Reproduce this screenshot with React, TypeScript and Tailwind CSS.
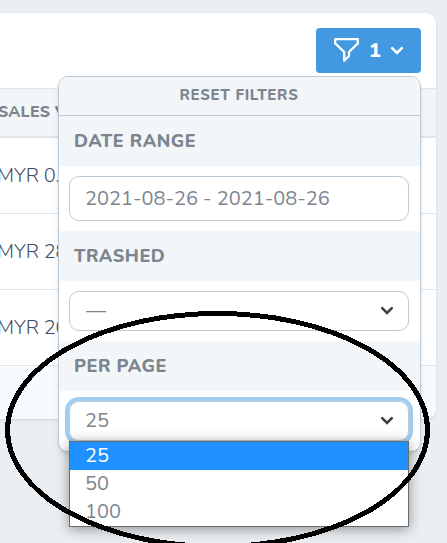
const sales = ["MYR 0.00", "MYR 28.00", "MYR 20.00"];
const perPage = ["25", "50", "100"];

const Chevron = ({ className }: { className: string }) => (
  <svg className={className} width="14" height="10" viewBox="0 0 14 10" fill="none" stroke="currentColor">
    <path d="M2.2 2.2 7 7l4.8-4.8" strokeWidth="2.6" strokeLinecap="round" />
  </svg>
);

const SectionTitle = ({ title }: { title: string }) => (
  <h3 className="flex h-[50px] items-center bg-[#f2f6f9] pl-[15px] text-[18px] leading-none font-extrabold tracking-[0.55px] text-[#7c858e]">
    {title}
  </h3>
);

const SalesTable = () => (
  <div className="h-[406px] w-[436px] overflow-hidden rounded-r-[10px] bg-white shadow-sm">
    <div className="h-[75px]" />
    <div className="flex h-[50px] items-center border-t border-b-2 border-[#e0e5e9] bg-[#f2f6f9] pb-0.5 text-[16px] leading-none font-extrabold tracking-[0.2px] whitespace-nowrap text-[#7c858e]">
      <span className="-ml-0.5">SALES VALUE</span>
    </div>
    {sales.map((value) => (
      <div key={value} className="flex h-[76px] items-center border-b border-[#e0e5e9] text-[20px] font-light tracking-[-0.1px] whitespace-nowrap text-[#3c4b5f]">
        <span className="-ml-[3px]">{value}</span>
      </div>
    ))}
    <div className="h-[53px] bg-[#f6fbff]" />
  </div>
);

const FilterMenu = () => (
  <div className="absolute top-[76px] left-[58px] h-[376px] w-[363px] overflow-hidden rounded-[10px] border border-[#bacad6] bg-white shadow-md">
    <button className="block h-[39px] w-full border-b border-[#bacad6] bg-[#f2f6f9] pr-px pb-0.5 text-[15px] leading-none font-extrabold tracking-[0.7px] text-[#7c858e]">
      RESET FILTERS
    </button>
    <SectionTitle title="DATE RANGE" />
    <div className="py-[10px] pr-[11px] pl-[10px]">
      <div className="flex h-[45px] items-center rounded-[10px] border border-[#bacad6] pl-[15px] text-[20px] text-[#7c858e]">
        <span>2021-08-26 - 2021-08-26</span>
      </div>
    </div>
    <SectionTitle title="TRASHED" />
    <div className="py-[10px] pr-[11px] pl-[10px]">
      <div className="flex h-10 items-center justify-between rounded-[10px] border border-[#bacad6] pr-[14px] pl-4 text-[20px] text-[#7c858e]">
        <span>—</span>
        <Chevron className="text-[#3c4046]" />
      </div>
    </div>
    <SectionTitle title="PER PAGE" />
    <div className="py-[10px] pr-[11px] pl-[10px]">
      <div className="flex h-10 items-center justify-between rounded-[10px] border border-[#bacad6] pr-[14px] pl-[15px] text-[20px] text-[#7c858e] ring-4 ring-[#a0cdf0]">
        <span>25</span>
        <Chevron className="text-[#3c4046]" />
      </div>
    </div>
  </div>
);

export default function App() {
  return (
    <div className="relative h-[543px] w-[447px] overflow-hidden bg-[#ebeff2] pt-[13px] font-['Nunito','Lato',sans-serif]">
      <SalesTable />

      <button className="absolute top-[28px] left-[316px] flex h-[45px] w-[105px] items-center rounded-[4px] bg-[#4299e1] pl-[17px] text-white">
        <svg width="27" height="27" viewBox="0 0 27 27" fill="none" stroke="currentColor" strokeWidth="2.3" strokeLinejoin="round">
          <path d="M2.2 2.2h22.6v4.2L16 15v4l-4.8 4.8V15L2.2 6.4z" />
        </svg>
        <span className="ml-[9px] w-3 text-center text-[20px] leading-none font-extrabold">1</span>
        <Chevron className="ml-[9px]" />
      </button>

      <FilterMenu />

      <ul className="absolute top-[441px] left-[69px] w-[340px] border border-[#666b70] bg-white text-[20px] leading-[28px] text-[#7c858e] shadow-[0_2px_12px_rgba(0,0,0,0.4)]">
        {perPage.map((n) => (
          <li key={n} className="h-7 pl-[15px] first:bg-[#1e90ff] first:text-white">
            {n}
          </li>
        ))}
      </ul>

      <svg className="absolute inset-0" width="447" height="543" viewBox="0 0 447 543" fill="none">
        <ellipse cx="217.5" cy="430" rx="210" ry="116.5" stroke="#000" strokeWidth="5" shapeRendering="crispEdges" />
      </svg>
    </div>
  );
}
